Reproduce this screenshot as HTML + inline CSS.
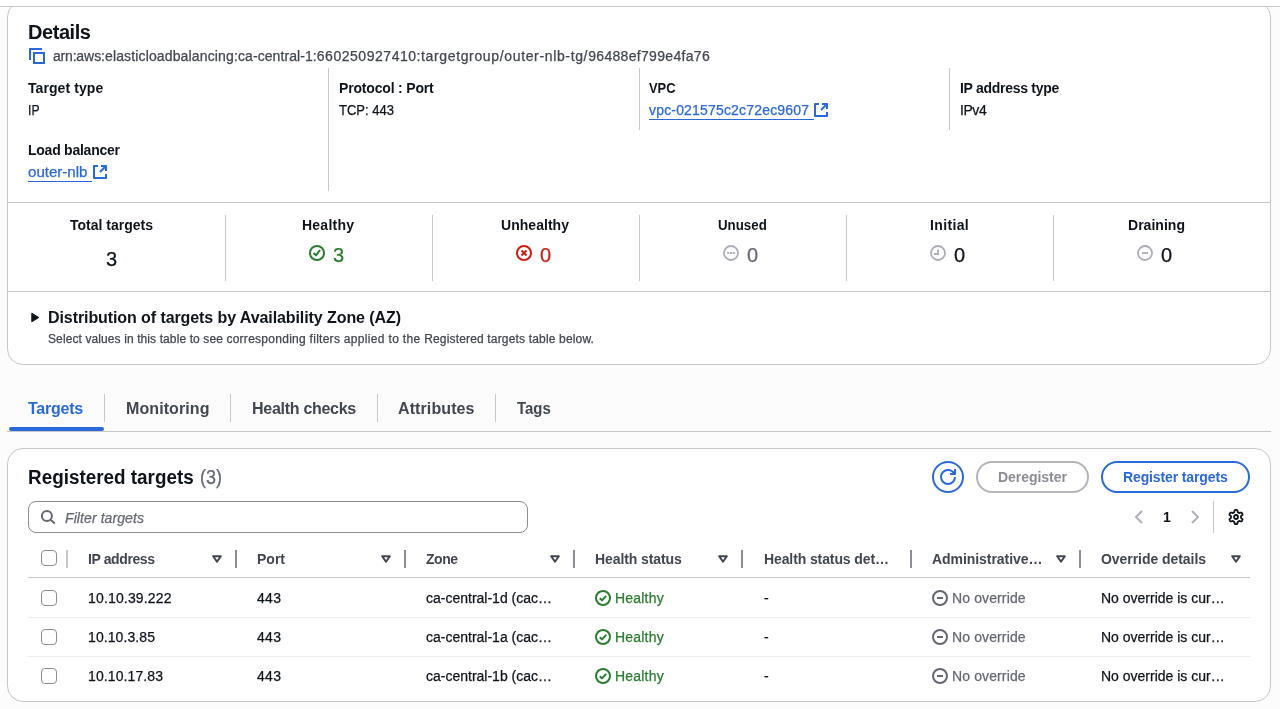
<!DOCTYPE html>
<html lang="en"><head>
<meta charset="utf-8">
<title>Target group details</title>
<style>
*{box-sizing:border-box;margin:0;padding:0}
html,body{width:1280px;height:709px;overflow:hidden;background:#fcfcfc}
body{position:relative;font-family:"Liberation Sans",Arial,sans-serif;font-size:14px;color:#0f141a;-webkit-font-smoothing:antialiased}
.wrap{position:absolute;left:0;top:0;width:1280px;height:709px;will-change:transform}
.abs{position:absolute}
.t{position:absolute;white-space:nowrap;line-height:20px;height:20px}
.t{-webkit-text-stroke:0.250px currentColor}
.b,.th,.tab{font-weight:700;-webkit-text-stroke:0}
.box{position:absolute;background:#fff;border:1px solid #c6c6cd;border-radius:16px}
.hl{position:absolute;height:1px;background:#c6c6cd}
.vl{position:absolute;width:1px;background:#c6c6cd}
.link{color:#2b69da}
.ul{position:absolute;height:1px;background:#2b69da}
.gray{color:#656871}
.green{color:#2a7d30}
.red{color:#cc1f14}
.tab{font-size:16px;font-weight:700;color:#424650;line-height:22px;height:22px}
.num{font-size:20px;line-height:24px;height:24px}
.th{font-weight:700;color:#424650}
.cb{position:absolute;width:16px;height:16px;border:1px solid #8c8c94;border-radius:4px;background:#fff}
svg{position:absolute;overflow:visible}
</style>
</head>
<body>
<div class="wrap">
<!-- top line -->
<!-- DETAILS CONTAINER -->
<div class="box" style="left:7px;top:1px;width:1264px;height:364px"></div>
<div class="abs" style="left:0;top:0;width:1280px;height:6px;background:#fff"></div>
<div class="hl" style="left:0;top:6px;width:1280px"></div>
<div class="t b" style="left: 28px; top: 20px; font-size: 20px; line-height: 24px; height: 24px; letter-spacing: -0.432px;">Details</div>
<svg style="left:28px;top:48px" width="17" height="16" viewBox="0 0 17 16" fill="none" stroke="#2b69da" stroke-width="2"><path d="M2 12V1h12"></path><rect x="6" y="5" width="10" height="10"></rect></svg>
<div class="t" style="left:53px;top:46px;color:#424650"><span style="letter-spacing: -0.194px;">arn:</span><span style="letter-spacing: -0.049px;">aws:</span><span style="letter-spacing: 0.144px;">elasticloadbalancing:</span><span style="letter-spacing: 0.076px;">ca-central-1:</span><span style="letter-spacing: 0.532px;">660250927410:</span><span style="letter-spacing: 0.646px;">targetgroup/</span><span style="letter-spacing: 0.647px;">outer-nlb-tg/</span><span style="letter-spacing: 0.319px;">96488ef799e4fa76</span></div>

<div class="t b" style="left: 28px; top: 78px; letter-spacing: 0.081px;">Target type</div>
<div class="t" style="left: 28px; top: 100px; transform-origin: 0px 50%; transform: scaleX(0.8689);">IP</div>
<div class="t b" style="left: 28px; top: 140px; letter-spacing: -0.243px;">Load balancer</div>
<div class="t link" style="left: 28px; top: 162px; transform-origin: 0px 50%; transform: scaleX(1.0766);">outer-nlb</div>
<div class="ul" style="left:28px;top:181px;width:64px"></div>
<svg style="left:92px;top:164px" width="16" height="16" viewBox="0 0 16 16" fill="none" stroke="#2b69da" stroke-width="2" stroke-linejoin="round"><path d="M6 2H2v12h12v-4"></path><path d="M9 2h5v5"></path><path d="M14 2L8 8"></path></svg>

<div class="vl" style="left:328px;top:68px;height:123px"></div>
<div class="t b" style="left: 339px; top: 78px; letter-spacing: -0.177px;">Protocol : Port</div>
<div class="t" style="left: 339px; top: 100px; transform-origin: 0px 50%; transform: scaleX(0.93);">TCP: 443</div>

<div class="vl" style="left:639px;top:68px;height:62px"></div>
<div class="t b" style="left: 649px; top: 78px; transform-origin: 0px 50%; transform: scaleX(0.9202);">VPC</div>
<div class="t link" style="left: 649px; top: 100px; letter-spacing: 0.177px;">vpc-021575c2c72ec9607</div>
<div class="ul" style="left:649px;top:119px;width:165px"></div>
<svg style="left:813px;top:102px" width="16" height="16" viewBox="0 0 16 16" fill="none" stroke="#2b69da" stroke-width="2" stroke-linejoin="round"><path d="M6 2H2v12h12v-4"></path><path d="M9 2h5v5"></path><path d="M14 2L8 8"></path></svg>

<div class="vl" style="left:949px;top:68px;height:62px"></div>
<div class="t b" style="left: 960px; top: 78px; letter-spacing: -0.282px;">IP address type</div>
<div class="t" style="left: 960px; top: 100px; letter-spacing: -0.439px;">IPv4</div>

<div class="hl" style="left:8px;top:202px;width:1262px"></div>

<!-- stats -->
<div class="t b" style="left: 70px; top: 215px; letter-spacing: 0.001px;">Total targets</div>
<div class="t num" style="left:106px;top:247px">3</div>
<div class="vl" style="left:225px;top:215px;height:66px"></div>
<div class="t b" style="left: 302px; top: 215px; letter-spacing: 0.237px;">Healthy</div>
<div class="t num green" style="left:333px;top:243px">3</div>
<div class="vl" style="left:432px;top:215px;height:66px"></div>
<div class="t b" style="left: 501px; top: 215px; letter-spacing: 0.039px;">Unhealthy</div>
<div class="t num red" style="left:540px;top:243px">0</div>
<div class="vl" style="left:639px;top:215px;height:66px"></div>
<div class="t b" style="left: 718px; top: 215px; transform-origin: 0px 50%; transform: scaleX(0.9495);">Unused</div>
<div class="t num gray" style="left:747px;top:243px">0</div>
<div class="vl" style="left:846px;top:215px;height:66px"></div>
<div class="t b" style="left: 930px; top: 215px; letter-spacing: 0.365px;">Initial</div>
<div class="t num" style="left:954px;top:243px">0</div>
<div class="vl" style="left:1053px;top:215px;height:66px"></div>
<div class="t b" style="left: 1128px; top: 215px; letter-spacing: 0.031px;">Draining</div>
<div class="t num" style="left:1161px;top:243px">0</div>


<!-- stat icons -->
<svg style="left:309px;top:245px" width="16" height="16" viewBox="0 0 16 16" fill="none" stroke="#2a7d30" stroke-width="2" stroke-linejoin="round"><circle cx="8" cy="8" r="7"></circle><path d="M4.500 8l2.500 2.300 4-5.300"></path></svg>
<svg style="left:516px;top:245px" width="16" height="16" viewBox="0 0 16 16" fill="none" stroke="#cc1f14" stroke-width="2"><circle cx="8" cy="8" r="7"></circle><path d="M5.500 5.500l5 5M10.500 5.500l-5 5"></path></svg>
<svg style="left:723px;top:245px" width="16" height="16" viewBox="0 0 16 16" fill="none" stroke="#adadb7" stroke-width="1.800"><circle cx="8" cy="8" r="7"></circle><path d="M4.200 8h2M7 8h2M9.800 8h2" stroke-width="1.800"></path></svg>
<svg style="left:930px;top:245px" width="16" height="16" viewBox="0 0 16 16" fill="none" stroke="#adadb7" stroke-width="1.800"><circle cx="8" cy="8" r="7"></circle><path d="M8 4.500V9H4"></path></svg>
<svg style="left:1137px;top:245px" width="16" height="16" viewBox="0 0 16 16" fill="none" stroke="#adadb7" stroke-width="1.800"><circle cx="8" cy="8" r="7"></circle><path d="M5 8h6"></path></svg>
<div class="hl" style="left:8px;top:291px;width:1262px"></div>

<!-- distribution -->
<svg style="left:31px;top:312px" width="9" height="11" viewBox="0 0 9 11"><path d="M0.800 1.200L7.800 5.500L0.800 9.800Z" fill="#0f141a" stroke="#0f141a" stroke-width="1" stroke-linejoin="round"></path></svg>
<div class="t b" style="left: 48px; top: 307.5px; font-size: 16px; letter-spacing: -0.085px;">Distribution of targets by Availability Zone (AZ)</div>
<div class="t" style="left:48px;top:331.100px;font-size:12px;line-height:16px;height:16px;color:#424650"><span style="letter-spacing: 0.103px;">Select values in this table to see </span><span style="letter-spacing: 0.273px;">corresponding filters </span><span style="letter-spacing: 0.333px;">applied to the </span><span style="letter-spacing: 0.166px;">Registered targets table below.</span></div>

<!-- TABS -->
<div class="hl" style="left:7px;top:431px;width:1264px"></div>
<div class="abs" style="left:9px;top:427px;width:95px;height:4px;border-radius:2px;background:#2b69da"></div>
<div class="t tab" style="left: 28px; top: 398px; color: rgb(43, 105, 218); letter-spacing: -0.227px;">Targets</div>
<div class="vl" style="left:104px;top:394px;height:28px"></div>
<div class="t tab" style="left: 126px; top: 398px; letter-spacing: 0.095px;">Monitoring</div>
<div class="vl" style="left:230px;top:394px;height:28px"></div>
<div class="t tab" style="left: 252px; top: 398px; letter-spacing: -0.28px;">Health checks</div>
<div class="vl" style="left:377px;top:394px;height:28px"></div>
<div class="t tab" style="left: 398px; top: 398px; letter-spacing: 0.104px;">Attributes</div>
<div class="vl" style="left:495px;top:394px;height:28px"></div>
<div class="t tab" style="left: 517px; top: 398px; transform-origin: 0px 50%; transform: scaleX(0.9334);">Tags</div>

<!-- REGISTERED TARGETS CONTAINER -->
<div class="box" style="left:7px;top:448px;width:1264px;height:254px"></div>
<div class="t b" style="left: 28px; top: 465px; font-size: 20px; line-height: 24px; height: 24px; transform-origin: 0px 50%; transform: scaleX(0.9438);">Registered targets</div>
<div class="t gray" style="left: 200px; top: 465px; font-size: 20px; line-height: 24px; height: 24px; transform-origin: 0px 50%; transform: scaleX(0.8997);">(3)</div>

<!-- buttons -->
<div class="abs" style="left:932px;top:461px;width:32px;height:32px;border:2px solid #2b69da;border-radius:16px"></div>
<svg style="left:940px;top:469px" width="16" height="16" viewBox="0 0 16 16" fill="none" stroke="#2b69da" stroke-width="2" stroke-linejoin="round"><path d="M15 8c0 3.870-3.130 7-7 7s-7-3.130-7-7 3.130-7 7-7c2.790 0 5.200 1.630 6.330 4"></path><path d="M10 5h5V0"></path></svg>
<div class="abs" style="left:976px;top:461px;width:113px;height:32px;border:2px solid #b4b4bb;border-radius:16px"></div>
<div class="t b" style="left: 998px; top: 467px; color: rgb(140, 140, 148); letter-spacing: -0.041px;">Deregister</div>
<div class="abs" style="left:1101px;top:461px;width:149px;height:32px;border:2px solid #2b69da;border-radius:16px"></div>
<div class="t b" style="left: 1123px; top: 467px; color: rgb(43, 105, 218); letter-spacing: -0.12px;">Register targets</div>

<!-- filter -->
<div class="abs" style="left:28px;top:501px;width:500px;height:32px;border:1px solid #8c8c94;border-radius:8px;background:#fff"></div>
<svg style="left:40px;top:509px" width="16" height="16" viewBox="0 0 16 16" fill="none" stroke="#656871" stroke-width="2"><circle cx="6.900" cy="7" r="5"></circle><path d="M10.500 10.700L14.800 14.500"></path></svg>
<div class="t" style="left: 65px; top: 508px; font-style: italic; color: rgb(101, 104, 113); letter-spacing: 0.091px;">Filter targets</div>

<!-- pagination -->
<svg style="left:1131px;top:509px" width="16" height="16" viewBox="0 0 16 16" fill="none" stroke="#b0b0ba" stroke-width="2"><path d="M11 2L5 8l6 6"></path></svg>
<div class="t b" style="left:1163px;top:507px">1</div>
<svg style="left:1187px;top:509px" width="16" height="16" viewBox="0 0 16 16" fill="none" stroke="#b0b0ba" stroke-width="2"><path d="M5 2l6 6-6 6"></path></svg>
<div class="vl" style="left:1213px;top:501px;height:32px"></div>
<svg style="left:1228px;top:509px" width="16" height="16" viewBox="0 0 16 16" fill="none" stroke="#0f141a" stroke-width="1.800" stroke-linejoin="round"><circle cx="8" cy="8" r="2"></circle><path d="M13.05 8.00L13.04 8.26L13.02 8.53L12.99 8.79L13.37 9.14L13.84 9.57L14.28 10.04L14.58 10.53L14.44 10.87L14.28 11.20L14.11 11.52L13.91 11.84L13.70 12.14L13.48 12.44L12.91 12.42L12.28 12.28L11.68 12.08L11.18 11.92L10.97 12.09L10.75 12.24L10.53 12.37L10.29 12.50L10.05 12.61L9.81 12.71L9.70 13.22L9.57 13.84L9.37 14.46L9.10 14.96L8.74 15.01L8.37 15.04L8.00 15.05L7.63 15.04L7.26 15.01L6.90 14.96L6.63 14.46L6.43 13.84L6.30 13.22L6.19 12.71L5.95 12.61L5.71 12.50L5.48 12.37L5.25 12.24L5.03 12.09L4.82 11.92L4.32 12.08L3.72 12.28L3.09 12.42L2.52 12.44L2.30 12.14L2.09 11.84L1.89 11.52L1.72 11.20L1.56 10.87L1.42 10.53L1.72 10.04L2.16 9.57L2.63 9.14L3.01 8.79L2.98 8.53L2.96 8.26L2.95 8.00L2.96 7.74L2.98 7.47L3.01 7.21L2.63 6.86L2.16 6.43L1.72 5.96L1.42 5.47L1.56 5.13L1.72 4.80L1.89 4.48L2.09 4.16L2.30 3.86L2.52 3.56L3.09 3.58L3.72 3.72L4.32 3.92L4.82 4.08L5.03 3.91L5.25 3.76L5.47 3.63L5.71 3.50L5.95 3.39L6.19 3.29L6.30 2.78L6.43 2.16L6.63 1.54L6.90 1.04L7.26 0.99L7.63 0.96L8.00 0.95L8.37 0.96L8.74 0.99L9.10 1.04L9.37 1.54L9.57 2.16L9.70 2.78L9.81 3.29L10.05 3.39L10.29 3.50L10.53 3.63L10.75 3.76L10.97 3.91L11.18 4.08L11.68 3.92L12.28 3.72L12.91 3.58L13.48 3.56L13.70 3.86L13.91 4.16L14.11 4.48L14.28 4.80L14.44 5.13L14.58 5.47L14.28 5.96L13.84 6.43L13.37 6.86L12.99 7.21L13.02 7.47L13.04 7.74Z"></path></svg>

<!-- table header -->
<div class="cb" style="left:41px;top:550px"></div>
<div class="vl" style="left:66px;top:550px;height:18px;width:2px"></div>
<div class="t th" style="left: 88px; top: 549px; letter-spacing: -0.396px;">IP address</div>
<div class="t th" style="left: 257px; top: 549px; letter-spacing: 0px;">Port</div>
<div class="t th" style="left: 426px; top: 549px; letter-spacing: -0.484px;">Zone</div>
<div class="t th" style="left: 595px; top: 549px; letter-spacing: -0.102px;">Health status</div>
<div class="t th" style="left: 764px; top: 549px; letter-spacing: -0.107px;">Health status det…</div>
<div class="t th" style="left: 932px; top: 549px; letter-spacing: -0.054px;">Administrative…</div>
<div class="t th" style="left: 1101px; top: 549px; letter-spacing: -0.055px;">Override details</div>
<div class="hl" style="left:28px;top:577px;width:1222px"></div>
<div class="hl" style="left:28px;top:617px;width:1222px;background:#ebebf0"></div>
<div class="hl" style="left:28px;top:656px;width:1222px;background:#ebebf0"></div>
<div class="abs" style="left:235px;top:550px;width:2px;height:18px;background:#8c8c94"></div>
<div class="abs" style="left:404px;top:550px;width:2px;height:18px;background:#8c8c94"></div>
<div class="abs" style="left:573px;top:550px;width:2px;height:18px;background:#8c8c94"></div>
<div class="abs" style="left:741px;top:550px;width:2px;height:18px;background:#8c8c94"></div>
<div class="abs" style="left:910px;top:550px;width:2px;height:18px;background:#8c8c94"></div>
<div class="abs" style="left:1079px;top:550px;width:2px;height:18px;background:#8c8c94"></div>
<svg style="left:212px;top:555px" width="10" height="8" viewBox="0 0 10 8" fill="none" stroke="#424650" stroke-width="2" stroke-linejoin="round"><path d="M1.200 1.200h7.600L5 6.800z"></path></svg>
<svg style="left:381px;top:555px" width="10" height="8" viewBox="0 0 10 8" fill="none" stroke="#424650" stroke-width="2" stroke-linejoin="round"><path d="M1.200 1.200h7.600L5 6.800z"></path></svg>
<svg style="left:550px;top:555px" width="10" height="8" viewBox="0 0 10 8" fill="none" stroke="#424650" stroke-width="2" stroke-linejoin="round"><path d="M1.200 1.200h7.600L5 6.800z"></path></svg>
<svg style="left:718px;top:555px" width="10" height="8" viewBox="0 0 10 8" fill="none" stroke="#424650" stroke-width="2" stroke-linejoin="round"><path d="M1.200 1.200h7.600L5 6.800z"></path></svg>
<svg style="left:1056px;top:555px" width="10" height="8" viewBox="0 0 10 8" fill="none" stroke="#424650" stroke-width="2" stroke-linejoin="round"><path d="M1.200 1.200h7.600L5 6.800z"></path></svg>
<svg style="left:1231px;top:555px" width="10" height="8" viewBox="0 0 10 8" fill="none" stroke="#424650" stroke-width="2" stroke-linejoin="round"><path d="M1.200 1.200h7.600L5 6.800z"></path></svg>
<div class="cb" style="left:41px;top:590px"></div>
<div class="t" style="left: 88px; top: 588px; letter-spacing: 0.159px;">10.10.39.222</div>
<div class="t" style="left: 257px; top: 588px; letter-spacing: 0.32px;">443</div>
<div class="t" style="left: 426px; top: 588px; letter-spacing: -0.003px;">ca-central-1d (cac…</div>
<svg style="left:595px;top:590px" width="16" height="16" viewBox="0 0 16 16" fill="none" stroke="#2a7d30" stroke-width="2" stroke-linejoin="round"><circle cx="8" cy="8" r="7"></circle><path d="M4.800 8.200l2.200 2.200 4.200-4.600"></path></svg>
<div class="t green" style="left: 615px; top: 588px; letter-spacing: 0.205px;">Healthy</div>
<div class="t" style="left:764px;top:588px">-</div>
<svg style="left:932px;top:590px" width="16" height="16" viewBox="0 0 16 16" fill="none" stroke="#656871" stroke-width="2"><circle cx="8" cy="8" r="7"></circle><path d="M5 8h6"></path></svg>
<div class="t gray" style="left: 952px; top: 588px; letter-spacing: 0.122px;">No override</div>
<div class="t" style="left: 1101px; top: 588px; letter-spacing: 0px;">No override is cur…</div>
<div class="cb" style="left:41px;top:629px"></div>
<div class="t" style="left: 88px; top: 627px; letter-spacing: 0.092px;">10.10.3.85</div>
<div class="t" style="left: 257px; top: 627px; letter-spacing: 0.32px;">443</div>
<div class="t" style="left: 426px; top: 627px; letter-spacing: -0.003px;">ca-central-1a (cac…</div>
<svg style="left:595px;top:629px" width="16" height="16" viewBox="0 0 16 16" fill="none" stroke="#2a7d30" stroke-width="2" stroke-linejoin="round"><circle cx="8" cy="8" r="7"></circle><path d="M4.800 8.200l2.200 2.200 4.200-4.600"></path></svg>
<div class="t green" style="left: 615px; top: 627px; letter-spacing: 0.205px;">Healthy</div>
<div class="t" style="left:764px;top:627px">-</div>
<svg style="left:932px;top:629px" width="16" height="16" viewBox="0 0 16 16" fill="none" stroke="#656871" stroke-width="2"><circle cx="8" cy="8" r="7"></circle><path d="M5 8h6"></path></svg>
<div class="t gray" style="left: 952px; top: 627px; letter-spacing: 0.122px;">No override</div>
<div class="t" style="left: 1101px; top: 627px; letter-spacing: 0px;">No override is cur…</div>
<div class="cb" style="left:41px;top:668px"></div>
<div class="t" style="left: 88px; top: 666px; letter-spacing: 0.103px;">10.10.17.83</div>
<div class="t" style="left: 257px; top: 666px; letter-spacing: 0.32px;">443</div>
<div class="t" style="left: 426px; top: 666px; letter-spacing: -0.003px;">ca-central-1b (cac…</div>
<svg style="left:595px;top:668px" width="16" height="16" viewBox="0 0 16 16" fill="none" stroke="#2a7d30" stroke-width="2" stroke-linejoin="round"><circle cx="8" cy="8" r="7"></circle><path d="M4.800 8.200l2.200 2.200 4.200-4.600"></path></svg>
<div class="t green" style="left: 615px; top: 666px; letter-spacing: 0.205px;">Healthy</div>
<div class="t" style="left:764px;top:666px">-</div>
<svg style="left:932px;top:668px" width="16" height="16" viewBox="0 0 16 16" fill="none" stroke="#656871" stroke-width="2"><circle cx="8" cy="8" r="7"></circle><path d="M5 8h6"></path></svg>
<div class="t gray" style="left: 952px; top: 666px; letter-spacing: 0.122px;">No override</div>
<div class="t" style="left: 1101px; top: 666px; letter-spacing: 0px;">No override is cur…</div>

</div>


</body></html>
